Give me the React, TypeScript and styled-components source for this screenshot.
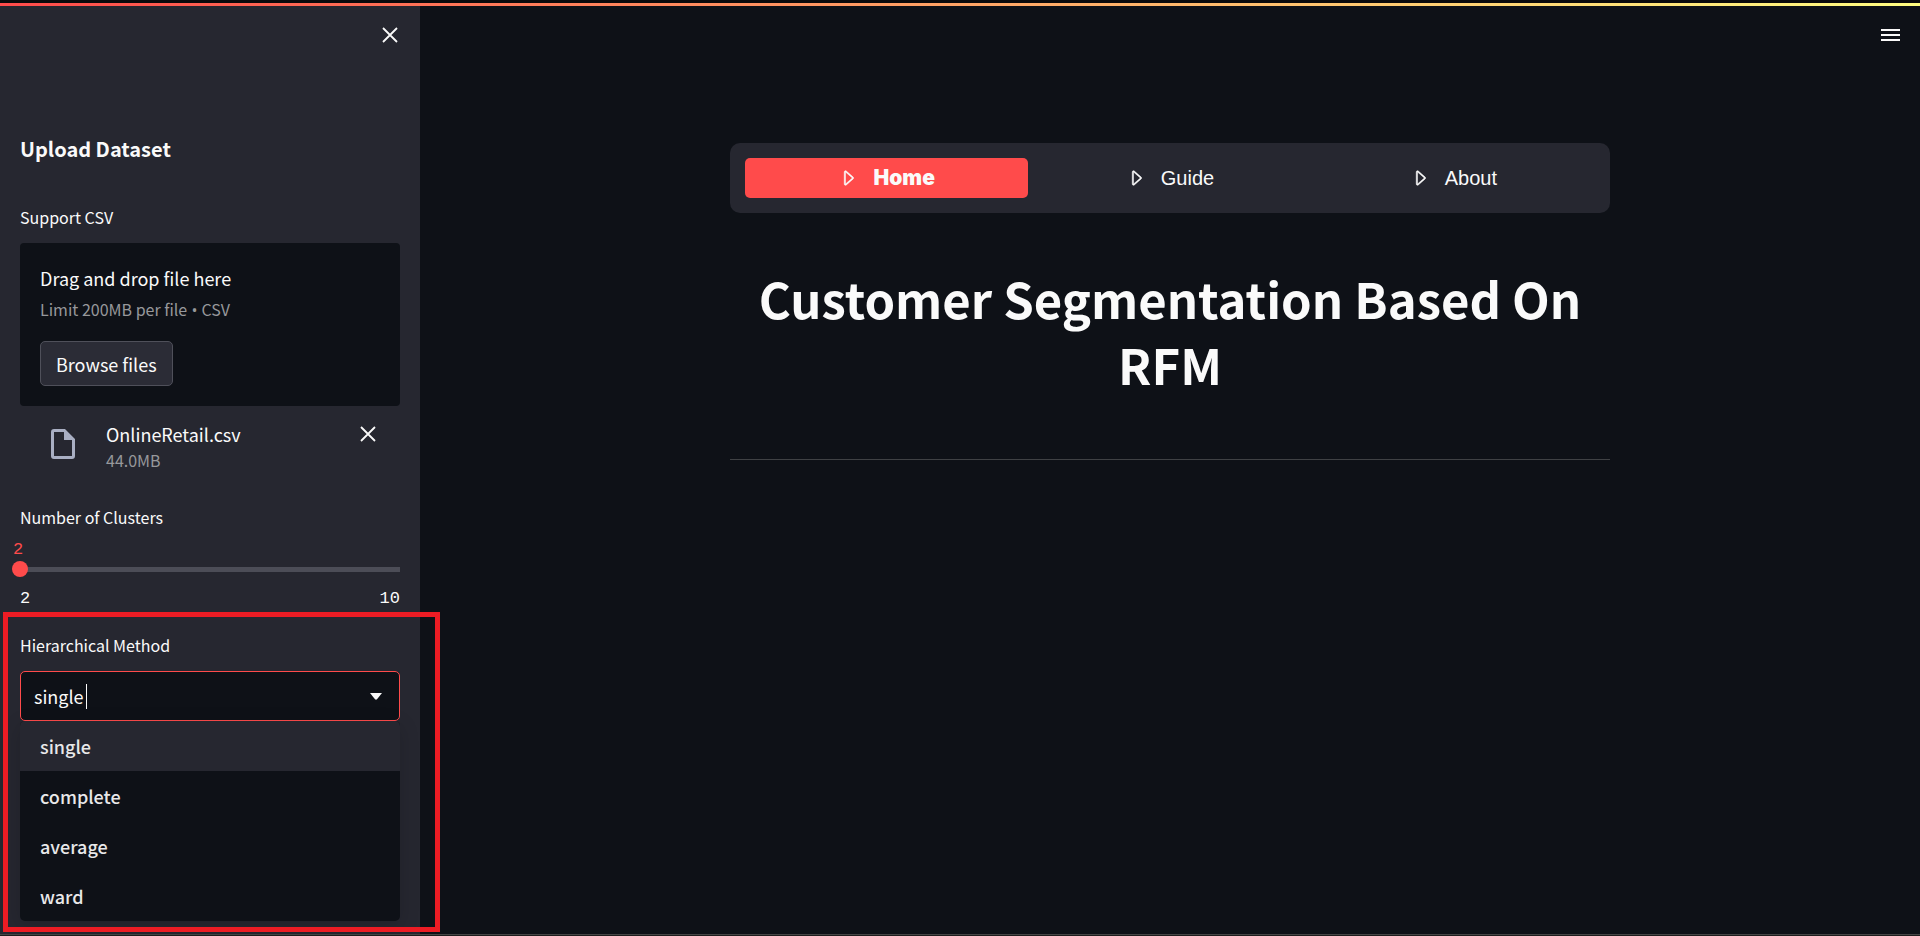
import React, { useState } from 'react';
import styled, { createGlobalStyle } from 'styled-components';
import { BsCaretRight } from 'react-icons/bs';

const sans = '"Noto Sans CJK SC", "Noto Sans", sans-serif';
const mono = '"Liberation Mono", monospace';

const c = {
  bg: '#0e1117',
  panel: '#262730',
  primary: '#ff4b4b',
  text: '#fafafa',
  muted: '#97989b',
  line: '#4c4d57',
};

const GlobalStyle = createGlobalStyle`
  * { box-sizing: border-box; }
  body {
    margin: 0;
    background: ${c.bg};
    color: ${c.text};
    font: 18px/24px ${sans};
  }
  button, input { font: inherit; color: inherit; }
`;

const Page = styled.div`
  display: flex;
  flex-direction: column;
  min-height: 100vh;
`;

const TopStrip = styled.div`
  height: 6px;
  border-top: 3px solid #0a0a0c;
  background: linear-gradient(90deg, ${c.primary}, #fffd80);
`;

const BottomStrip = styled.div`
  height: 2px;
  border-top: 1px solid #454545;
  background: #1e1e1e;
`;

const Shell = styled.div`
  display: flex;
  flex: 1;
`;

const Sidebar = styled.aside`
  flex: none;
  width: 420px;
  padding: 0 20px 12px;
  background: ${c.panel};
`;

const SidebarTop = styled.div`
  display: flex;
  justify-content: flex-end;
  align-items: center;
  height: 58px;
  padding-right: 2px;
`;

const IconButton = styled.button`
  display: flex;
  padding: 0;
  border: 0;
  background: none;
  cursor: pointer;
`;

const SidebarTitle = styled.h2`
  margin: 73px 0 44px;
  font-size: 20px;
  line-height: 24px;
  font-weight: 700;
`;

const Label = styled.label`
  display: block;
  margin-bottom: 14px;
  font-size: 16px;
  line-height: 24px;
`;

const Small = styled.span`
  font-size: 16px;
  line-height: 24px;
  color: ${c.muted};
`;

const Bullet = styled.span`
  font-family: "Open Sans", sans-serif;
  line-height: 16px;
`;

const DropZone = styled.section`
  display: flex;
  flex-direction: column;
  align-items: flex-start;
  padding: 20px;
  border-radius: 4px;
  background: ${c.bg};
`;

const DropTitle = styled.span`
  margin: 3px 0 7px;
`;

const BrowseButton = styled.button`
  height: 45px;
  margin-top: 20px;
  padding: 0 15px;
  border: 1px solid #4f505a;
  border-radius: 5px;
  background: #2b2c36;
  cursor: pointer;
`;

const FileRow = styled.div`
  display: flex;
  align-items: flex-start;
  padding: 16px 24px 0 26px;
`;

const FileInfo = styled.div`
  display: flex;
  flex: 1;
  flex-direction: column;
  gap: 2px;
  margin-left: 26px;
`;

const FileIconBox = styled.span`
  display: flex;
  padding-top: 5px;
`;

const RemoveSlot = styled.div`
  padding-top: 4px;
`;

const SliderBlock = styled.div`
  margin-top: 33px;
`;

const SliderValue = styled.output`
  display: block;
  margin-left: -7px;
  font: 17px/14px ${mono};
  color: ${c.primary};
`;

const Slider = styled.input`
  display: block;
  width: calc(100% + 16px);
  height: 16px;
  margin: 4px -8px 0;
  appearance: none;
  background: linear-gradient(${c.line}, ${c.line}) center / calc(100% - 16px) 5px no-repeat;
  cursor: pointer;

  &::-webkit-slider-thumb {
    appearance: none;
    width: 16px;
    height: 16px;
    border-radius: 50%;
    background: ${c.primary};
  }
`;

const Ticks = styled.div`
  display: flex;
  justify-content: space-between;
  margin-top: 12px;
  font: 17px/20px ${mono};
`;

const MethodBlock = styled.div`
  position: relative;
  margin-top: 24px;
`;

const Highlight = styled.div`
  position: absolute;
  inset: -21px -40px -11px -17px;
  border: 5px solid #ed1c24;
  pointer-events: none;
`;

const Combo = styled.div`
  display: flex;
  align-items: center;
  height: 50px;
  padding: 0 17px 0 13px;
  border: 1px solid ${c.primary};
  border-radius: 5px;
  background: ${c.bg};
`;

const ComboInput = styled.input`
  field-sizing: content;
  max-width: 300px;
  padding: 0;
  border: 0;
  outline: 0;
  background: none;
  caret-color: transparent;
`;

const TextCursor = styled.span`
  width: 1px;
  height: 25px;
  margin: 0 auto 0 2px;
  background: ${c.text};
`;

const Menu = styled.ul`
  margin: 0;
  padding: 0;
  overflow: hidden;
  list-style: none;
  border-radius: 5px;
  background: ${c.bg};
  box-shadow: 0 5px 20px rgba(0, 0, 0, 0.16);
`;

const Option = styled.li<{ $active: boolean }>`
  padding: 13px 20px;
  line-height: 24px;
  font-weight: 500;
  color: #e8e8e9;
  background: ${(p) => (p.$active ? c.panel : 'transparent')};
  cursor: pointer;
`;

const Main = styled.main`
  display: flex;
  flex: 1;
  flex-direction: column;
  min-width: 0;
`;

const Toolbar = styled.header`
  display: flex;
  justify-content: flex-end;
  align-items: center;
  height: 58px;
  padding-right: 20px;
`;

const Content = styled.div`
  width: 100%;
  max-width: 920px;
  margin: 0 auto;
  padding: 79px 20px 0;
`;

const Nav = styled.nav`
  display: grid;
  grid-template-columns: repeat(3, 1fr);
  padding: 15px;
  border-radius: 10px;
  background: ${c.panel};
`;

const NavLink = styled.a<{ $active?: boolean }>`
  display: flex;
  justify-content: center;
  align-items: center;
  gap: 15px;
  height: 40px;
  border-radius: 5px;
  font-family: ${(p) => (p.$active ? 'Inter' : '"Liberation Sans"')}, Arial, sans-serif;
  font-size: ${(p) => (p.$active ? 21 : 20)}px;
  font-weight: ${(p) => (p.$active ? 900 : 400)};
  color: ${c.text};
  text-decoration: none;
  background: ${(p) => (p.$active ? c.primary : 'transparent')};

  svg {
    stroke: currentColor;
    stroke-width: 0.4;
  }
`;

const Title = styled.h1`
  margin: 52px 0 0;
  font-size: 49px;
  line-height: 66px;
  font-weight: 700;
  text-align: center;
`;

const Divider = styled.hr`
  height: 1px;
  margin: 62px 0 0;
  border: 0;
  background: #3f4144;
`;

const CloseIcon = () => (
  <svg width="16" height="16" viewBox="0 0 16 16" stroke="#fafafa" strokeWidth="1.8" aria-hidden="true">
    <path d="M1 1 15 15M15 1 1 15" />
  </svg>
);

const FileIcon = () => (
  <svg width="34" height="34" viewBox="0 0 34 34" aria-hidden="true">
    <path
      fill="#a9afc3"
      fillRule="evenodd"
      d="M8 2h11l10 10v17a3 3 0 0 1-3 3H8a3 3 0 0 1-3-3V5a3 3 0 0 1 3-3Zm0 3v24h18V13h-8V5Z"
    />
  </svg>
);

const ArrowIcon = () => (
  <svg width="12" height="7" viewBox="0 0 12 7" aria-hidden="true">
    <path fill="#fafafa" d="M0 0h12L7 6.3q-1 .9-2 0Z" />
  </svg>
);

const MenuIcon = () => (
  <svg width="20" height="14" viewBox="0 0 20 14" stroke="#fafafa" strokeWidth="2" aria-hidden="true">
    <path d="M1 2h19M1 7h19M1 12h19" />
  </svg>
);

const methods = ['single', 'complete', 'average', 'ward'];
const pages = ['Home', 'Guide', 'About'];

export default function App() {
  const [clusters, setClusters] = useState(2);
  const [method, setMethod] = useState('single');

  return (
    <>
      <GlobalStyle />
      <Page>
        <TopStrip />
        <Shell>
          <Sidebar>
            <SidebarTop>
              <IconButton type="button" aria-label="Close sidebar"><CloseIcon /></IconButton>
            </SidebarTop>
            <SidebarTitle>Upload Dataset</SidebarTitle>
            <Label htmlFor="browse">Support CSV</Label>
            <DropZone>
              <DropTitle>Drag and drop file here</DropTitle>
              <Small>Limit 200MB per file<Bullet> • </Bullet>CSV</Small>
              <BrowseButton id="browse" type="button">Browse files</BrowseButton>
            </DropZone>
            <FileRow>
              <FileIconBox><FileIcon /></FileIconBox>
              <FileInfo>
                <span>OnlineRetail.csv</span>
                <Small>44.0MB</Small>
              </FileInfo>
              <RemoveSlot>
                <IconButton type="button" aria-label="Remove file"><CloseIcon /></IconButton>
              </RemoveSlot>
            </FileRow>
            <SliderBlock>
              <Label htmlFor="clusters">Number of Clusters</Label>
              <SliderValue htmlFor="clusters">{clusters}</SliderValue>
              <Slider
                id="clusters"
                type="range"
                min={2}
                max={10}
                value={clusters}
                onChange={(e) => setClusters(Number(e.target.value))}
              />
              <Ticks><span>2</span><span>10</span></Ticks>
            </SliderBlock>
            <MethodBlock>
              <Label htmlFor="method">Hierarchical Method</Label>
              <Combo>
                <ComboInput
                  id="method"
                  role="combobox"
                  aria-expanded="true"
                  aria-controls="method-list"
                  value={method}
                  onChange={(e) => setMethod(e.target.value)}
                />
                <TextCursor />
                <ArrowIcon />
              </Combo>
              <Menu id="method-list" role="listbox">
                {methods.map((m) => (
                  <Option key={m} role="option" aria-selected={m === method} $active={m === method} onClick={() => setMethod(m)}>
                    {m}
                  </Option>
                ))}
              </Menu>
              <Highlight />
            </MethodBlock>
          </Sidebar>
          <Main>
            <Toolbar>
              <IconButton type="button" aria-label="Main menu"><MenuIcon /></IconButton>
            </Toolbar>
            <Content>
              <Nav>
                {pages.map((p, i) => (
                  <NavLink key={p} href="#" $active={i === 0}>
                    <BsCaretRight size={20} />
                    {p}
                  </NavLink>
                ))}
              </Nav>
              <Title>Customer Segmentation Based On RFM</Title>
              <Divider />
            </Content>
          </Main>
        </Shell>
        <BottomStrip />
      </Page>
    </>
  );
}
